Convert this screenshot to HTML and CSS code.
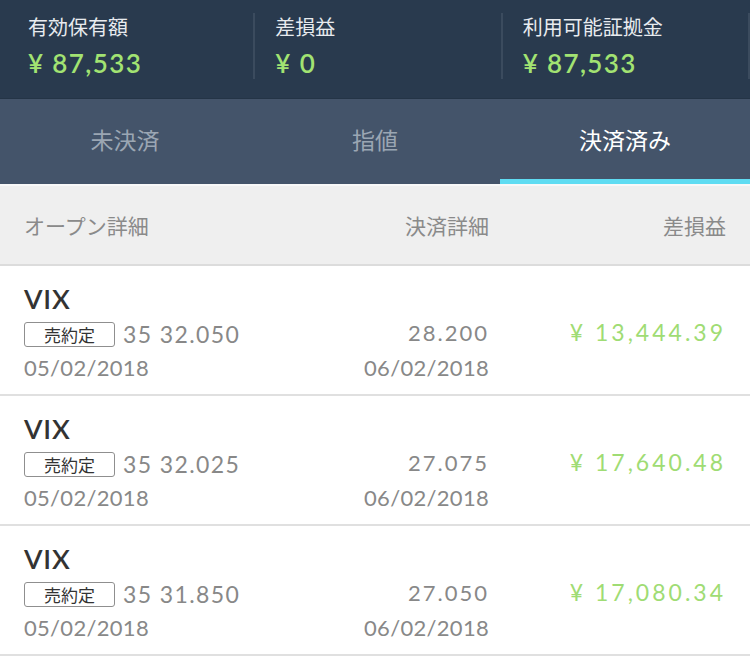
FILE: index.html
```html
<!DOCTYPE html>
<html lang="ja">
<head>
<meta charset="utf-8">
<title>決済済み</title>
<link rel="stylesheet" href="styles.css">
</head>
<body>
<div class="app">
  <header class="summary">
    <div class="stat">
      <div class="stat-label">有効保有額</div>
      <div class="stat-value">¥ 87,533</div>
    </div>
    <div class="stat">
      <div class="stat-label">差損益</div>
      <div class="stat-value">¥ 0</div>
    </div>
    <div class="stat">
      <div class="stat-label">利用可能証拠金</div>
      <div class="stat-value">¥ 87,533</div>
    </div>
  </header>
  <nav class="tabs">
    <div class="tab">未決済</div>
    <div class="tab">指値</div>
    <div class="tab active">決済済み</div>
  </nav>
  <div class="table-head">
    <span class="th-open">オープン詳細</span>
    <span class="th-close">決済詳細</span>
    <span class="th-pl">差損益</span>
  </div>
  <ul class="rows">
    <li class="row">
      <div class="open">
        <div class="symbol">VIX</div>
        <div class="order"><span class="badge">売約定</span><span class="qty">35 32.050</span></div>
        <div class="date">05/02/2018</div>
      </div>
      <div class="close">
        <div class="price">28.200</div>
        <div class="date">06/02/2018</div>
      </div>
      <div class="pl">¥ 13,444.39</div>
    </li>
    <li class="row">
      <div class="open">
        <div class="symbol">VIX</div>
        <div class="order"><span class="badge">売約定</span><span class="qty">35 32.025</span></div>
        <div class="date">05/02/2018</div>
      </div>
      <div class="close">
        <div class="price">27.075</div>
        <div class="date">06/02/2018</div>
      </div>
      <div class="pl">¥ 17,640.48</div>
    </li>
    <li class="row">
      <div class="open">
        <div class="symbol">VIX</div>
        <div class="order"><span class="badge">売約定</span><span class="qty">35 31.850</span></div>
        <div class="date">05/02/2018</div>
      </div>
      <div class="close">
        <div class="price">27.050</div>
        <div class="date">06/02/2018</div>
      </div>
      <div class="pl">¥ 17,080.34</div>
    </li>
  </ul>
</div>
</body>
</html>
```

FILE: styles.css
```css
html, body {
  margin: 0;
  padding: 0;
  background: #ffffff;
}

body {
  font-family: "Lato", "Noto Sans CJK JP", sans-serif;
  width: 750px;
}

.app {
  width: 750px;
}

/* Summary header */
.summary {
  display: flex;
  background: #293a4e;
  padding: 13px 0 19px 8px;
  height: 66px;
  border-bottom: 1px solid #243446;
}

.stat {
  flex: 1;
  padding-left: 20px;
  border-right: 2px solid #3b4b5e;
}

.stat-label {
  font-family: "Noto Sans CJK JP", sans-serif;
  font-size: 20px;
  line-height: 28px;
  color: #e8ebef;
}

.stat-value {
  margin-top: 6px;
  font-size: 26px;
  font-weight: 600;
  line-height: 32px;
  letter-spacing: 1.4px;
  color: #a2e372;
}

/* Tabs */
.tabs {
  display: flex;
  background: #44546a;
  height: 85px;
}

.tab {
  flex: 1;
  position: relative;
  display: flex;
  align-items: center;
  justify-content: center;
  padding-bottom: 6px;
  font-family: "Noto Sans CJK JP", sans-serif;
  font-size: 23px;
  color: #9ba6b3;
}

.tab.active {
  color: #ffffff;
}

.tab.active::after {
  content: "";
  position: absolute;
  left: 0;
  right: 0;
  bottom: 0;
  height: 5px;
  background: #5fdcf2;
}

/* Table head */
.table-head {
  display: grid;
  grid-template-columns: 1fr 200px 237px;
  align-items: center;
  height: 78px;
  padding: 0 24px;
  background: #efefef;
  border-top: 2px solid #f8f8f8;
  border-bottom: 2px solid #dcdcdc;
  font-family: "Noto Sans CJK JP", sans-serif;
  font-size: 21px;
  color: #8a8a8a;
}

.th-close,
.th-pl {
  text-align: right;
}

/* Rows */
.rows {
  list-style: none;
  margin: 0;
  padding: 0;
}

.row {
  display: grid;
  grid-template-columns: 1fr 200px 237px;
  height: 130px;
  box-sizing: border-box;
  padding: 14px 24px 0;
  border-bottom: 2px solid #e0e0e0;
}

.symbol {
  font-size: 27px;
  font-weight: 600;
  line-height: 37px;
  letter-spacing: 0.8px;
  color: #333333;
}

.order {
  display: flex;
  align-items: center;
  height: 34px;
}

.badge {
  box-sizing: border-box;
  width: 91px;
  height: 25px;
  display: flex;
  align-items: center;
  justify-content: center;
  border: 1.5px solid #8f8f8f;
  border-radius: 3px;
  font-family: "Noto Sans CJK JP", sans-serif;
  font-size: 17px;
  color: #333333;
  margin-right: 8px;
}

.qty {
  font-size: 23px;
  letter-spacing: 1.4px;
  color: #888888;
}

.date {
  font-size: 22px;
  line-height: 34px;
  letter-spacing: 0.3px;
  color: #888888;
}

.close {
  text-align: right;
  padding-top: 35px;
}

.close .price {
  font-size: 22px;
  line-height: 35px;
  letter-spacing: 2px;
  color: #888888;
}

.close .date {
  line-height: 35px;
}

.pl {
  text-align: right;
  padding-top: 35px;
  font-size: 23px;
  line-height: 35px;
  letter-spacing: 3px;
  color: #9fdc74;
}
```
